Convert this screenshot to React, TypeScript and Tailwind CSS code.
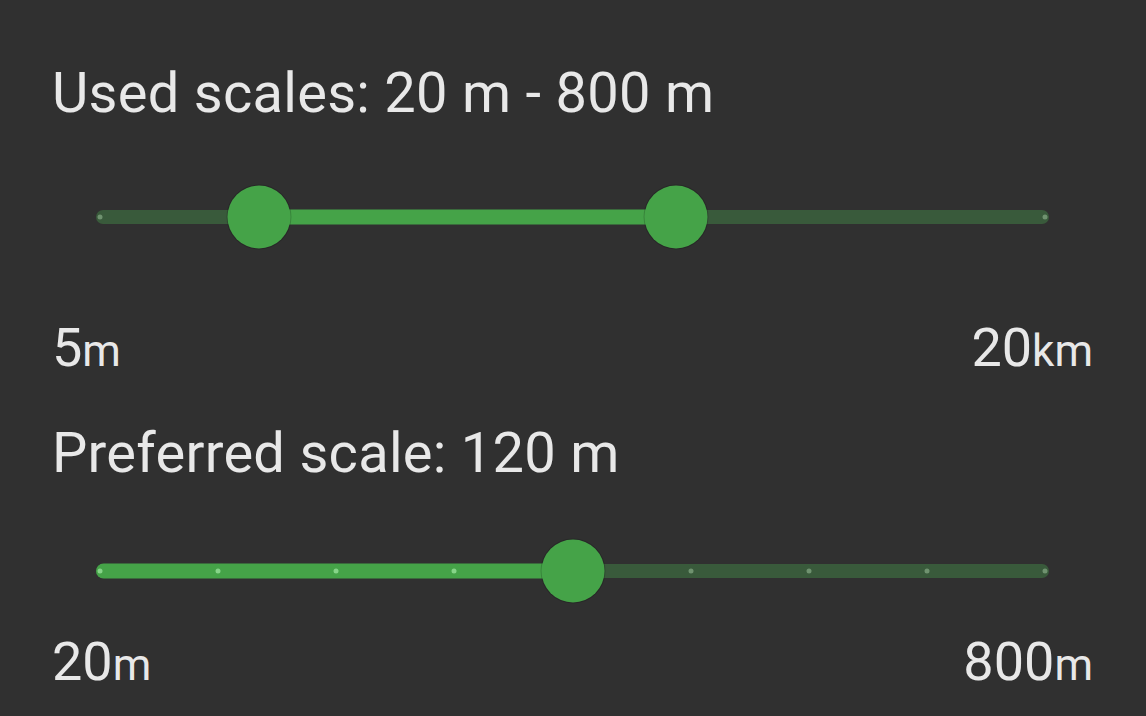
import React from "react";

const TRACK_W = 953;
const DOT_INSET = 4;
const SPAN = TRACK_W - DOT_INSET * 2;

type SliderProps = {
  values: number[]; // fractions 0..1
  ticks: number[]; // fractions 0..1
  range?: boolean;
};

function Slider({ values, ticks, range }: SliderProps) {
  const lo = range ? values[0] : 0;
  const hi = range ? values[1] : values[0];
  const pos = (f: number) => DOT_INSET + f * SPAN;
  const activeLeft = range ? pos(lo) : 0;
  const activeRight = pos(hi);

  return (
    <div className="relative ml-[96px] h-[64px] w-[953px]">
      {/* inactive track */}
      <div className="absolute left-0 right-0 top-1/2 h-[14px] -translate-y-1/2 rounded-full bg-[#395a3b]" />
      {/* active track */}
      <div
        className="absolute top-1/2 h-[15px] -translate-y-1/2 rounded-full bg-[#45a348]"
        style={{ left: activeLeft, width: activeRight - activeLeft }}
      />
      {/* tick dots */}
      {ticks.map((t) => {
        const active = t >= lo && t <= hi;
        return (
          <div
            key={t}
            className={
              active
                ? "absolute top-1/2 h-[5px] w-[5px] -translate-x-1/2 -translate-y-1/2 rounded-full bg-[#86d488]"
                : "absolute top-1/2 h-[5px] w-[5px] -translate-x-1/2 -translate-y-1/2 rounded-full bg-[#6f926f]"
            }
            style={{ left: pos(t) }}
          />
        );
      })}
      {/* thumbs */}
      {values.map((v, i) => (
        <div
          key={i}
          className="absolute top-1/2 h-[63px] w-[63px] -translate-x-1/2 -translate-y-1/2 rounded-full bg-[#45a348] shadow-[0_0_0_1px_rgba(0,0,0,0.18)]"
          style={{ left: pos(v) }}
        />
      ))}
    </div>
  );
}

function Label({ num, unit }: { num: string; unit: string }) {
  return (
    <span className="leading-[64px]">
      <span className="text-[54px]">{num}</span>
      <span className="text-[44px]">{unit}</span>
    </span>
  );
}

export default function App() {
  const prefTicks = Array.from({ length: 9 }, (_, i) => i / 8);

  return (
    <div
      className="flex h-[716px] w-[1146px] flex-col overflow-hidden bg-[#303030] pl-[52px] pr-[53px] text-[#e8e8e8]"
      style={{ fontFamily: "Roboto, 'Noto Sans', sans-serif" }}
    >
      <div className="mt-[60px] text-[56px] leading-[67px] tracking-[0.005em]">Used scales: 20 m - 800 m</div>

      <div className="-ml-[52px] mt-[58px]">
        <Slider values={[0.168, 0.61]} ticks={[0, 1]} range />
      </div>

      <div className="mt-[67px] flex items-baseline justify-between">
        <Label num="5" unit="m" />
        <Label num="20" unit="km" />
      </div>

      <div className="mt-[27px] text-[56px] leading-[67px] tracking-[0.005em]">Preferred scale: 120 m</div>

      <div className="-ml-[52px] mt-[52px]">
        <Slider values={[0.5]} ticks={prefTicks} />
      </div>

      <div className="mt-[27px] flex items-baseline justify-between">
        <Label num="20" unit="m" />
        <Label num="800" unit="m" />
      </div>
    </div>
  );
}
